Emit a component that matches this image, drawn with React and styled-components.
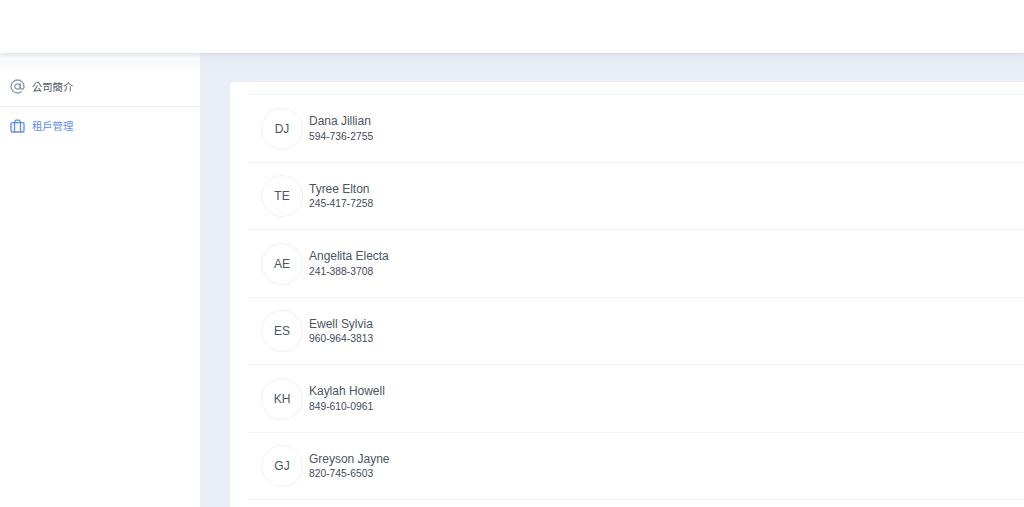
import React from 'react';
import styled, { createGlobalStyle } from 'styled-components';

const Global = createGlobalStyle`
  html, body { margin: 0; padding: 0; height: 100%; overflow: hidden; background: #fff; }
  body { font-family: "Liberation Sans", Arial, "Noto Sans CJK TC", sans-serif; }
`;
const Page = styled.div`
  height: 507px; display: flex; flex-direction: column; overflow: hidden;
`;
const Header = styled.header`
  height: 53px; flex: none; background: #fff; box-shadow: 0 1px 4px rgba(120,135,170,.2); position: relative; z-index: 2;
`;
const Body = styled.div`flex: 1; display: flex; min-height: 0;`;
const Sidebar = styled.nav`
  width: 200px; flex: none; background: #fff;
  background-image: linear-gradient(180deg, #f3f4f6 0, #fff 20px);
  padding-top: 14px;
`;
const MenuItem = styled.div`
  height: ${p => p.$active ? '37px' : '39px'}; display: flex; align-items: center; gap: 7px; padding-left: 10px;
  font-size: 10.3px; color: ${p => p.$active ? '#5a8dee' : '#4b5563'};
  border-bottom: ${p => p.$divider ? '1px solid #eef0f4' : 'none'};
  svg { color: ${p => p.$active ? '#5a8dee' : '#8e99ab'}; flex: none; }
`;
const Main = styled.main`
  flex: 1; min-width: 0; background: #eaeef6; padding: 29px 0 0 30px;
  background-image: linear-gradient(180deg, #e5e9f2 0, #eaeef6 14px);
`;
const Card = styled.section`
  background: #fff; border-radius: 4px 0 0 0; height: 100%; padding: 12px 0 0 18px; box-sizing: border-box;
`;
const Row = styled.div`
  height: 67.5px; box-sizing: border-box; display: flex; align-items: center; gap: 6px; padding: 1px 0 0 13px;
  border-top: 1px solid #f1f3f6;
`;
const Avatar = styled.div`
  width: 40px; height: 40px; border-radius: 50%; border: 1px solid #f0f1f4; display: flex; align-items: center; justify-content: center;
  font-size: 12px; color: #4b5563; flex: none; margin-top: -0.3px;
`;
const Info = styled.div`display: flex; flex-direction: column; gap: 1.75px; padding-top: 0.35px;`;
const Name = styled.div`font-size: 12px; line-height: 14px; color: #4b5563; letter-spacing: -0.02px;`;
const Phone = styled.div`font-size: 10.3px; line-height: 14px; color: #3f4a5a;`;

const AtIcon = () => (
  <svg width="15" height="15" viewBox="0 0 15 15" fill="none" stroke="currentColor" strokeWidth="1.3" strokeLinecap="round">
    <circle cx="7.5" cy="7.5" r="2.7" />
    <path d="M10.2 4.8v3.6c0 1.1.7 1.8 1.6 1.8 1.1 0 2.2-1 2.2-2.7A6.5 6.5 0 1 0 7.5 14c1.5 0 2.7-.4 3.8-1.2" />
  </svg>
);
const CaseIcon = () => (
  <svg width="15" height="14" viewBox="0 0 15 14" fill="none" stroke="currentColor" strokeWidth="1.3" strokeLinejoin="round">
    <rect x="1" y="3.7" width="13" height="9.3" rx="1.3" />
    <path d="M4.5 3.7v9.3M10.5 3.7v9.3M5 3.7V2.2c0-.6.4-1 1-1h3c.6 0 1 .4 1 1v1.5" />
  </svg>
);

const people = [
  ['DJ', 'Dana Jillian', '594-736-2755'],
  ['TE', 'Tyree Elton', '245-417-7258'],
  ['AE', 'Angelita Electa', '241-388-3708'],
  ['ES', 'Ewell Sylvia', '960-964-3813'],
  ['KH', 'Kaylah Howell', '849-610-0961'],
  ['GJ', 'Greyson Jayne', '820-745-6503'],
];

export default function App() {
  return (
    <Page>
      <Global />
      <Header />
      <Body>
        <Sidebar>
          <MenuItem $divider><AtIcon />公司簡介</MenuItem>
          <MenuItem $active><CaseIcon />租戶管理</MenuItem>
        </Sidebar>
        <Main>
          <Card>
            {people.map(([i, n, p]) => (
              <Row key={i}>
                <Avatar>{i}</Avatar>
                <Info><Name>{n}</Name><Phone>{p}</Phone></Info>
              </Row>
            ))}
            <Row />
          </Card>
        </Main>
      </Body>
    </Page>
  );
}
